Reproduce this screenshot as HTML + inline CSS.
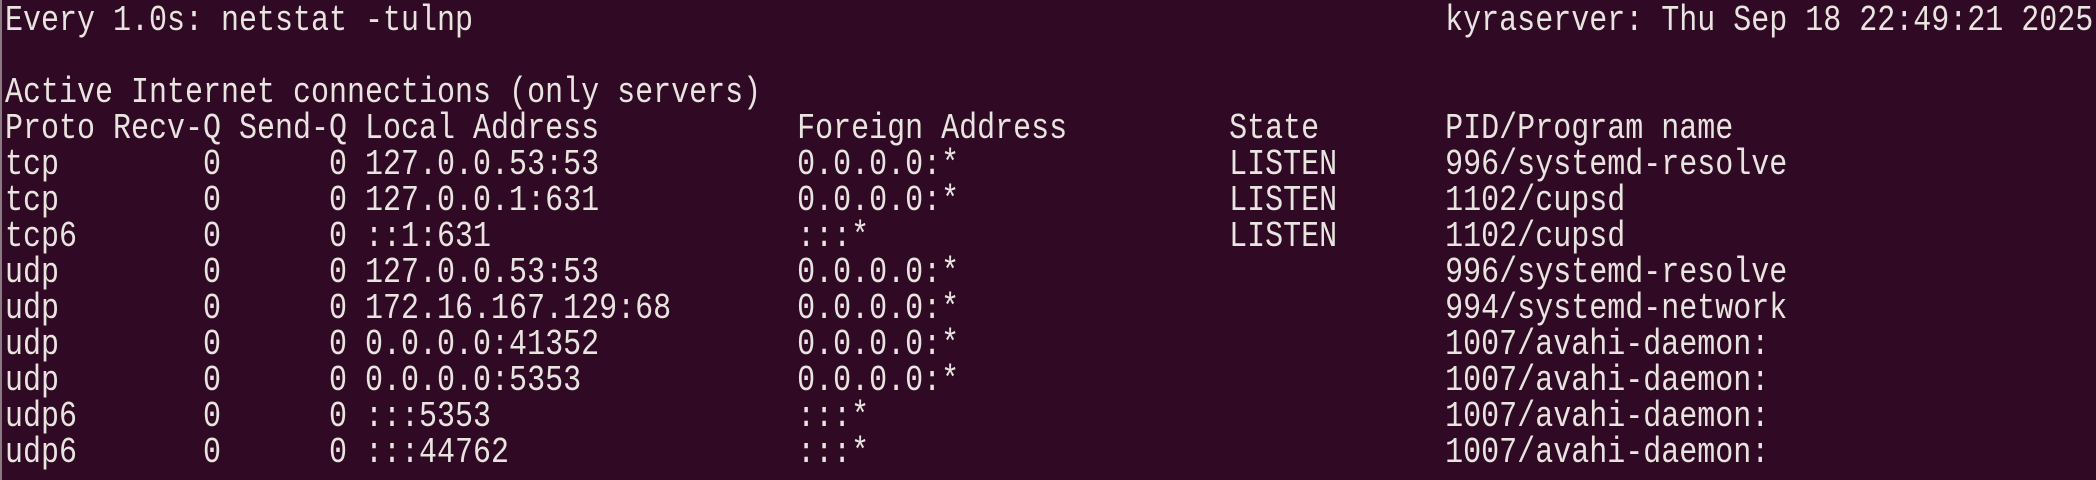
<!DOCTYPE html>
<html><head><meta charset="utf-8"><style>
html,body{margin:0;padding:0;background:#300a24;}
body{width:2096px;height:480px;overflow:hidden;position:relative;}
.edge{position:absolute;left:0;top:0;width:2px;height:480px;background:#8a7a84;}
pre{position:absolute;left:5px;top:3px;margin:0;font-family:"Liberation Mono",monospace;font-size:36px;line-height:36px;color:#e8e4e0;white-space:pre;transform:scaleX(0.8333);transform-origin:0 0;}
</style></head><body><div class="edge"></div><pre>Every 1.0s: netstat -tulnp                                                      kyraserver: Thu Sep 18 22:49:21 2025

Active Internet connections (only servers)
Proto Recv-Q Send-Q Local Address           Foreign Address         State       PID/Program name
tcp        0      0 127.0.0.53:53           0.0.0.0:*               LISTEN      996/systemd-resolve
tcp        0      0 127.0.0.1:631           0.0.0.0:*               LISTEN      1102/cupsd
tcp6       0      0 ::1:631                 :::*                    LISTEN      1102/cupsd
udp        0      0 127.0.0.53:53           0.0.0.0:*                           996/systemd-resolve
udp        0      0 172.16.167.129:68       0.0.0.0:*                           994/systemd-network
udp        0      0 0.0.0.0:41352           0.0.0.0:*                           1007/avahi-daemon:
udp        0      0 0.0.0.0:5353            0.0.0.0:*                           1007/avahi-daemon:
udp6       0      0 :::5353                 :::*                                1007/avahi-daemon:
udp6       0      0 :::44762                :::*                                1007/avahi-daemon:</pre></body></html>
